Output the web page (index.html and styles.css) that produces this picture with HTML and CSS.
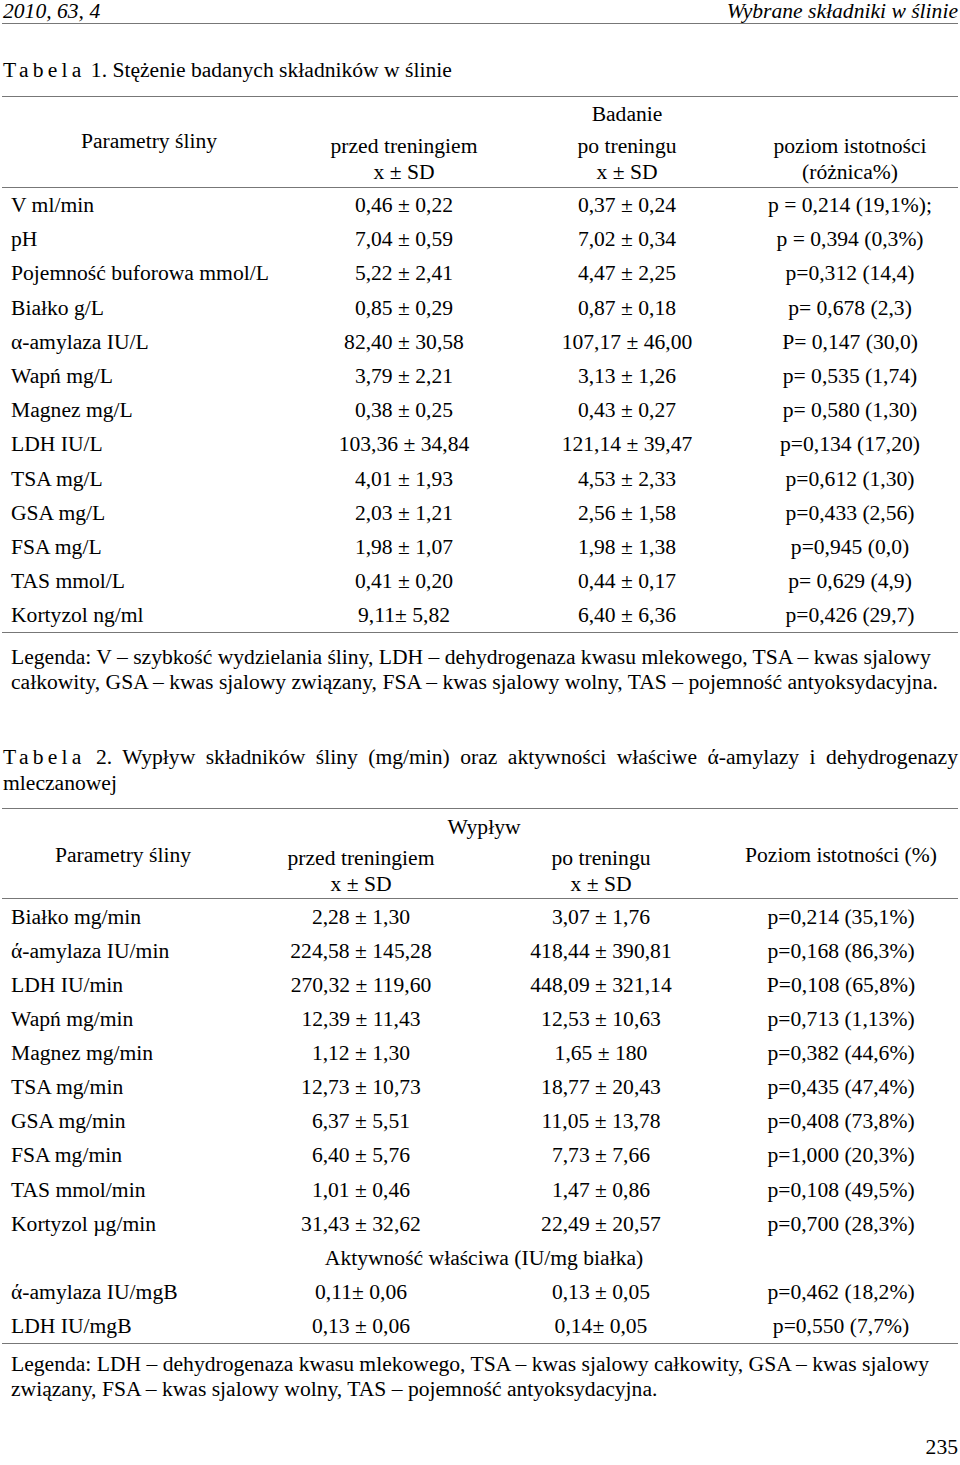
FILE: index.html
```html
<!DOCTYPE html>
<html lang="pl">
<head>
<meta charset="utf-8">
<title>Wybrane składniki w ślinie</title>
<link rel="stylesheet" href="styles.css">
</head>
<body>
<div class="page">
  <header class="running-head">
    <span>2010, 63, 4</span>
    <span>Wybrane składniki w ślinie</span>
  </header>

  <p class="caption caption-1"><span class="spaced">Tabela</span> 1. Stężenie badanych składników w ślinie</p>

  <table class="data t1">
    <colgroup><col class="c1"><col class="c2"><col class="c3"><col class="c4"></colgroup>
    <thead>
      <tr class="h-top">
        <th class="param" rowspan="2">Parametry śliny</th>
        <th></th>
        <th>Badanie</th>
        <th></th>
      </tr>
      <tr class="h-sub">
        <th>przed treningiem<br>x ± SD</th>
        <th>po treningu<br>x ± SD</th>
        <th>poziom istotności<br>(różnica%)</th>
      </tr>
    </thead>
    <tbody>
      <tr><td>V ml/min</td><td>0,46 ± 0,22</td><td>0,37 ± 0,24</td><td>p = 0,214 (19,1%);</td></tr>
      <tr><td>pH</td><td>7,04 ± 0,59</td><td>7,02 ± 0,34</td><td>p = 0,394 (0,3%)</td></tr>
      <tr><td>Pojemność buforowa mmol/L</td><td>5,22 ± 2,41</td><td>4,47 ± 2,25</td><td>p=0,312 (14,4)</td></tr>
      <tr><td>Białko g/L</td><td>0,85 ± 0,29</td><td>0,87 ± 0,18</td><td>p= 0,678 (2,3)</td></tr>
      <tr><td>α-amylaza IU/L</td><td>82,40 ± 30,58</td><td>107,17 ± 46,00</td><td>P= 0,147 (30,0)</td></tr>
      <tr><td>Wapń mg/L</td><td>3,79 ± 2,21</td><td>3,13 ± 1,26</td><td>p= 0,535 (1,74)</td></tr>
      <tr><td>Magnez mg/L</td><td>0,38 ± 0,25</td><td>0,43 ± 0,27</td><td>p= 0,580 (1,30)</td></tr>
      <tr><td>LDH IU/L</td><td>103,36 ± 34,84</td><td>121,14 ± 39,47</td><td>p=0,134 (17,20)</td></tr>
      <tr><td>TSA mg/L</td><td>4,01 ± 1,93</td><td>4,53 ± 2,33</td><td>p=0,612 (1,30)</td></tr>
      <tr><td>GSA mg/L</td><td>2,03 ± 1,21</td><td>2,56 ± 1,58</td><td>p=0,433 (2,56)</td></tr>
      <tr><td>FSA mg/L</td><td>1,98 ± 1,07</td><td>1,98 ± 1,38</td><td>p=0,945 (0,0)</td></tr>
      <tr><td>TAS mmol/L</td><td>0,41 ± 0,20</td><td>0,44 ± 0,17</td><td>p= 0,629 (4,9)</td></tr>
      <tr><td>Kortyzol ng/ml</td><td>9,11± 5,82</td><td>6,40 ± 6,36</td><td>p=0,426 (29,7)</td></tr>
    </tbody>
  </table>

  <p class="legend legend-1">Legenda: V – szybkość wydzielania śliny, LDH – dehydrogenaza kwasu mlekowego, TSA – kwas sjalowy<br>całkowity, GSA – kwas sjalowy związany, FSA – kwas sjalowy wolny, TAS – pojemność antyoksydacyjna.</p>

  <div class="caption caption-2">
    <p class="cap-line cap-justify"><span class="spaced">Tabela</span> <span>2. Wypływ składników śliny (mg/min) oraz aktywności właściwe ά-amylazy i dehydrogenazy</span></p>
    <p class="cap-line">mleczanowej</p>
  </div>

  <table class="data t2">
    <colgroup><col class="c1"><col class="c2"><col class="c3"><col class="c4"></colgroup>
    <thead>
      <tr class="h-top">
        <th class="param" rowspan="2">Parametry śliny</th>
        <th colspan="2">Wypływ</th>
        <th class="param" rowspan="2">Poziom istotności (%)</th>
      </tr>
      <tr class="h-sub">
        <th>przed treningiem<br>x ± SD</th>
        <th>po treningu<br>x ± SD</th>
      </tr>
    </thead>
    <tbody>
      <tr><td>Białko mg/min</td><td>2,28 ± 1,30</td><td>3,07 ± 1,76</td><td>p=0,214 (35,1%)</td></tr>
      <tr><td>ά-amylaza IU/min</td><td>224,58 ± 145,28</td><td>418,44 ± 390,81</td><td>p=0,168 (86,3%)</td></tr>
      <tr><td>LDH IU/min</td><td>270,32 ± 119,60</td><td>448,09 ± 321,14</td><td>P=0,108 (65,8%)</td></tr>
      <tr><td>Wapń mg/min</td><td>12,39 ± 11,43</td><td>12,53 ± 10,63</td><td>p=0,713 (1,13%)</td></tr>
      <tr><td>Magnez mg/min</td><td>1,12 ± 1,30</td><td>1,65 ± 180</td><td>p=0,382 (44,6%)</td></tr>
      <tr><td>TSA mg/min</td><td>12,73 ± 10,73</td><td>18,77 ± 20,43</td><td>p=0,435 (47,4%)</td></tr>
      <tr><td>GSA mg/min</td><td>6,37 ± 5,51</td><td>11,05 ± 13,78</td><td>p=0,408 (73,8%)</td></tr>
      <tr><td>FSA mg/min</td><td>6,40 ± 5,76</td><td>7,73 ± 7,66</td><td>p=1,000 (20,3%)</td></tr>
      <tr><td>TAS mmol/min</td><td>1,01 ± 0,46</td><td>1,47 ± 0,86</td><td>p=0,108 (49,5%)</td></tr>
      <tr><td>Kortyzol µg/min</td><td>31,43 ± 32,62</td><td>22,49 ± 20,57</td><td>p=0,700 (28,3%)</td></tr>
      <tr><td></td><td colspan="2">Aktywność właściwa (IU/mg białka)</td><td></td></tr>
      <tr><td>ά-amylaza IU/mgB</td><td>0,11± 0,06</td><td>0,13 ± 0,05</td><td>p=0,462 (18,2%)</td></tr>
      <tr><td>LDH IU/mgB</td><td>0,13 ± 0,06</td><td>0,14± 0,05</td><td>p=0,550 (7,7%)</td></tr>
    </tbody>
  </table>

  <p class="legend legend-2">Legenda: LDH – dehydrogenaza kwasu mlekowego, TSA – kwas sjalowy całkowity, GSA – kwas sjalowy<br>związany, FSA – kwas sjalowy wolny, TAS – pojemność antyoksydacyjna.</p>

  <footer class="folio">235</footer>
</div>
</body>
</html>
```

FILE: styles.css
```css
html, body {
  margin: 0;
  padding: 0;
  background: #fff;
}

body {
  font-family: "Liberation Serif", "Times New Roman", serif;
  font-size: 21.6px;
  color: #000;
}

.page {
  width: 956px;
  height: 1465px;
  margin: 0 2px;
  display: flex;
  flex-direction: column;
}

.running-head {
  display: flex;
  justify-content: space-between;
  font-style: italic;
  height: 23px;
  line-height: 23px;
  padding: 0 0 0 1px;
  border-bottom: 1px solid #777;
}

.caption {
  margin: 0;
  line-height: 26px;
  padding-left: 1px;
}

.caption-1 {
  margin-top: 33px;
  margin-bottom: 13px;
}

.caption-2 {
  margin-top: 49px;
  margin-bottom: 12px;
}

.cap-line {
  margin: 0;
}

.cap-justify {
  text-align: justify;
  text-align-last: justify;
}

.spaced {
  display: inline-block;
  letter-spacing: 4.2px;
}

.data {
  width: 956px;
  border-collapse: collapse;
  table-layout: fixed;
  border-top: 1px solid #777;
  border-bottom: 1px solid #777;
}

.data th {
  font-weight: normal;
  text-align: center;
  line-height: 26px;
  padding: 0;
}

.data thead tr.h-top th {
  padding-top: 4px;
  height: 26px;
  vertical-align: top;
}

.data thead tr.h-sub th {
  padding-top: 6px;
  padding-bottom: 2px;
  vertical-align: top;
  border-bottom: 1px solid #777;
}

.data thead tr.h-top th.param {
  padding-top: 31px;
  vertical-align: top;
  border-bottom: 1px solid #777;
}

.data td {
  height: 34.2px;
  padding: 0;
  text-align: center;
  vertical-align: middle;
  white-space: nowrap;
  line-height: 24px;
}

.data td:first-child {
  text-align: left;
  padding-left: 9px;
}

.t1 .c1 { width: 294px; }
.t1 .c2 { width: 216px; }
.t1 .c3 { width: 230px; }
.t1 .c4 { width: 216px; }

.t2 .c1 { width: 242px; }
.t2 .c2 { width: 234px; }
.t2 .c3 { width: 246px; }
.t2 .c4 { width: 234px; }

.t2 thead tr.h-top th {
  padding-top: 5px;
}

.t2 thead tr.h-top th.param {
  padding-top: 33px;
}

.t2 thead tr.h-sub th {
  padding-top: 5px;
  padding-bottom: 1px;
}

.t2 td {
  height: 34.15px;
}

.legend {
  margin: 0;
  padding-left: 9px;
  line-height: 25px;
}

.legend-1 {
  margin-top: 12px;
}

.legend-2 {
  margin-top: 8px;
}

.folio {
  margin-top: auto;
  margin-bottom: 6px;
  text-align: right;
  line-height: 24px;
}
```
